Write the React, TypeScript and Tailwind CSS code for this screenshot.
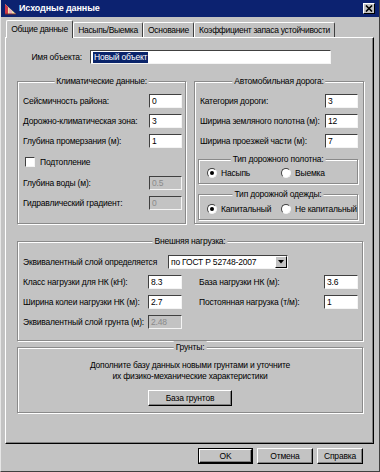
import React from 'react';

// Classic Win9x style dialog: "Исходные данные"

const sunken =
  'border border-t-[#404040] border-l-[#404040] border-r-[#f4f4f4] border-b-[#f4f4f4]';

function Edit({
  value,
  w,
  disabled = false,
  selected = false,
}: {
  value: string;
  w: string;
  disabled?: boolean;
  selected?: boolean;
}) {
  return (
    <div
      className={`${w} h-[14px] shrink-0 flex items-center pl-[2px] ${sunken} ${
        disabled ? 'bg-[#c3c3c3] text-[#8a8a8a]' : 'bg-white text-black'
      }`}
    >
      {selected ? (
        <span className="bg-[#0a246a] text-white leading-[11px] px-[1px]">{value}</span>
      ) : (
        <span className="leading-[11px]">{value}</span>
      )}
    </div>
  );
}

function Radio({ checked, label }: { checked?: boolean; label: string }) {
  return (
    <div className="flex items-center gap-[4px]">
      <span
        className={`w-[10px] h-[10px] rounded-full bg-white flex items-center justify-center ${sunken}`}
      >
        {checked && <span className="w-[4px] h-[4px] rounded-full bg-black" />}
      </span>
      <span>{label}</span>
    </div>
  );
}

function GroupBox({
  title,
  className = '',
  children,
}: {
  title: string;
  className?: string;
  children: React.ReactNode;
}) {
  return (
    <div
      className={`relative border border-[#8a8a8a] shadow-[1px_1px_0_#fff,inset_1px_1px_0_#fff] ${className}`}
    >
      <span className="absolute -top-[7px] left-1/2 -translate-x-1/2 bg-[#c3c3c3] px-[2px] leading-[12px] whitespace-nowrap">
        {title}
      </span>
      {children}
    </div>
  );
}

function Row({ label, children }: { label: string; children: React.ReactNode }) {
  return (
    <div className="flex items-center justify-between h-[14px]">
      <span>{label}</span>
      {children}
    </div>
  );
}

function Button({ label, w, isDefault = false }: { label: string; w: string; isDefault?: boolean }) {
  return (
    <div className={`${w} h-[16px] ${isDefault ? 'border border-black' : ''}`}>
      <div className="w-full h-full flex items-center justify-center border border-t-white border-l-white border-r-black border-b-black shadow-[inset_-1px_-1px_0_#808080] bg-[#c3c3c3]">
        {label}
      </div>
    </div>
  );
}

function Tab({ label, w, active = false }: { label: string; w: string; active?: boolean }) {
  return (
    <div
      className={`${w} shrink-0 flex justify-center whitespace-nowrap border border-b-0 border-t-white border-l-white border-r-[#404040] rounded-t-[2px] ${
        active ? 'h-[18px] -mb-[1px] pt-[2px] bg-[#c3c3c3]' : 'h-[15px] pt-[1px]'
      }`}
    >
      {label}
    </div>
  );
}

export default function App() {
  return (
    <div className="w-[380px] h-[472px] bg-[#c3c3c3] flex flex-col border-l border-l-[#e6e6e6] border-r border-r-[#404040] border-b border-b-[#404040] font-['Liberation_Sans',Arial,sans-serif] text-[8.5px] tracking-[-0.2px] text-black overflow-hidden">
      {/* title bar */}
      <div className="h-[17px] shrink-0 bg-[#0c2270] flex items-center pl-[3px] pr-[4px]">
        <svg width="13" height="12" viewBox="0 0 13 12">
          <polygon points="1,1 12,11 1,11" fill="#f0e4a8" />
          <polygon points="1,1 4,4 4,11 1,11" fill="#d03848" />
          <polygon points="5,5 8,8 8,11 5,11" fill="#e8b0c0" />
          <line x1="1" y1="11" x2="12" y2="11" stroke="#7a2a2a" strokeWidth="1" />
        </svg>
        <span className="ml-[2px] text-white font-bold text-[9px] tracking-[-0.1px]">Исходные данные</span>
        <div className="ml-auto w-[12px] h-[11px] bg-[#c3c3c3] border border-t-white border-l-white border-r-black border-b-black flex items-center justify-center">
          <svg width="8" height="7" viewBox="0 0 8 7">
            <path d="M1 0.5 L7 6.5 M7 0.5 L1 6.5" stroke="#000" strokeWidth="1.6" />
          </svg>
        </div>
      </div>

      {/* tabs */}
      <div className="flex items-end pl-[5px] mt-[3px] h-[17px] shrink-0 relative z-10 tracking-[-0.3px]">
        <Tab label="Общие данные" w="w-[67px]" active />
        <Tab label="Насыпь/Выемка" w="w-[70px]" />
        <Tab label="Основание" w="w-[51px]" />
        <Tab label="Коэффициент запаса устойчивости" w="w-[141px]" />
      </div>

      {/* tab panel */}
      <div className="ml-[4px] w-[369px] h-[407px] shrink-0 border border-t-white border-l-white border-r-black border-b-black shadow-[inset_-1px_-1px_0_#808080] pl-[11px] pt-[12px]">
        <div className="flex items-center h-[14px]">
          <span className="w-[73px] text-right pr-[8px] pl-[12px] whitespace-nowrap">Имя объекта:</span>
          <Edit value="Новый объект" w="w-[241px]" selected />
        </div>

        <div className="flex gap-[8px] mt-[17px]">
          {/* climate */}
          <GroupBox title="Климатические данные:" className="w-[169px] h-[143px] pl-[5px] pr-[3px] pt-[12px]">
            <div className="flex flex-col gap-[6px]">
              <Row label="Сейсмичность района:">
                <Edit value="0" w="w-[33px]" />
              </Row>
              <Row label="Дорожно-климатическая зона:">
                <Edit value="3" w="w-[33px]" />
              </Row>
              <Row label="Глубина промерзания (м):">
                <Edit value="1" w="w-[33px]" />
              </Row>
              <div className="flex items-center h-[16px] gap-[5px] pl-[2px]">
                <span className={`w-[10px] h-[10px] bg-white ${sunken}`} />
                <span>Подтопление</span>
              </div>
              <Row label="Глубина воды (м):">
                <Edit value="0.5" w="w-[33px]" disabled />
              </Row>
              <Row label="Гидравлический градиент:">
                <Edit value="0" w="w-[33px]" disabled />
              </Row>
            </div>
          </GroupBox>

          {/* road */}
          <GroupBox title="Автомобильная дорога:" className="w-[170px] h-[143px] pl-[5px] pr-[5px] pt-[12px]">
            <div className="flex flex-col gap-[6px]">
              <Row label="Категория дороги:">
                <Edit value="3" w="w-[33px]" />
              </Row>
              <Row label="Ширина земляного полотна (м):">
                <Edit value="12" w="w-[33px]" />
              </Row>
              <Row label="Ширина проезжей части (м):">
                <Edit value="7" w="w-[33px]" />
              </Row>
            </div>
            <GroupBox title="Тип дорожного полотна:" className="-ml-[2px] mt-[11px] w-[160px] h-[25px] pt-[7px] pl-[8px]">
              <div className="flex">
                <div className="w-[74px]">
                  <Radio checked label="Насыпь" />
                </div>
                <Radio label="Выемка" />
              </div>
            </GroupBox>
            <GroupBox title="Тип дорожной одежды:" className="-ml-[2px] mt-[10px] w-[160px] h-[26px] pt-[8px] pl-[8px]">
              <div className="flex">
                <div className="w-[74px]">
                  <Radio checked label="Капитальный" />
                </div>
                <Radio label="Не капитальный" />
              </div>
            </GroupBox>
          </GroupBox>
        </div>

        {/* external load */}
        <GroupBox title="Внешняя нагрузка:" className="mt-[17px] w-[346px] h-[100px] pl-[5px] pt-[13px]">
          <div className="flex flex-col gap-[6px]">
            <div className="flex items-center h-[14px]">
              <span className="w-[145px]">Эквивалентный слой определяется</span>
              <div className={`w-[120px] h-[14px] bg-white flex items-center ${sunken}`}>
                <span className="pl-[2px] flex-1">по ГОСТ Р 52748-2007</span>
                <div className="w-[12px] h-[12px] bg-[#c3c3c3] border border-t-white border-l-white border-r-black border-b-black flex items-center justify-center">
                  <svg width="6" height="4" viewBox="0 0 6 4">
                    <polygon points="0,0 6,0 3,3.5" fill="#000" />
                  </svg>
                </div>
              </div>
            </div>
            <div className="flex items-center h-[14px]">
              <span className="w-[125px]">Класс нагрузки для НК (кН):</span>
              <Edit value="8.3" w="w-[34px]" />
              <span className="w-[17px]" />
              <span className="w-[125px]">База нагрузки НК (м):</span>
              <Edit value="3.6" w="w-[34px]" />
            </div>
            <div className="flex items-center h-[14px]">
              <span className="w-[125px]">Ширина колеи нагрузки НК (м):</span>
              <Edit value="2.7" w="w-[34px]" />
              <span className="w-[17px]" />
              <span className="w-[125px]">Постоянная нагрузка (т/м):</span>
              <Edit value="1" w="w-[34px]" />
            </div>
            <div className="flex items-center h-[14px]">
              <span className="w-[125px]">Эквивалентный слой грунта (м):</span>
              <Edit value="2.48" w="w-[34px]" disabled />
            </div>
          </div>
        </GroupBox>

        {/* soils */}
        <GroupBox title="Грунты:" className="mt-[6px] w-[346px] h-[66px] pt-[12px] flex flex-col items-center">
          <p className="text-center leading-[11px]">
            Дополните базу данных новыми грунтами и уточните
            <br />
            их физико-механические характеристики
          </p>
          <div className="mt-[8px]">
            <Button label="База грунтов" w="w-[84px]" />
          </div>
        </GroupBox>
      </div>

      {/* footer buttons */}
      <div className="flex justify-end gap-[4px] pr-[16px] mt-[4px]">
        <Button label="OK" w="w-[55px]" isDefault />
        <Button label="Отмена" w="w-[56px]" />
        <Button label="Справка" w="w-[46px]" />
      </div>
    </div>
  );
}
